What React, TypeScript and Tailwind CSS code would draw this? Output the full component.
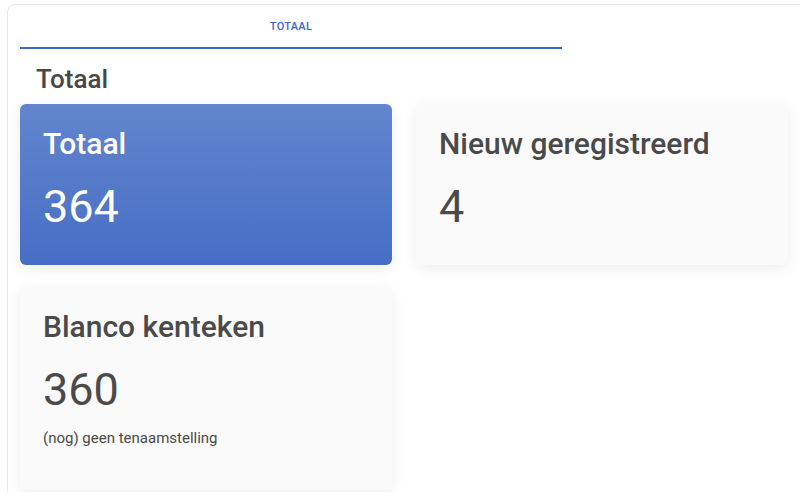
export default function App() {
  const font = { fontFamily: "Roboto, 'Noto Sans', sans-serif" };

  return (
    <div className="w-[800px] h-[492px] overflow-hidden bg-white" style={font}>
      {/* outer panel */}
      <div className="ml-[7px] mt-[4px] w-[830px] h-[520px] rounded-lg border border-[#e6e6e6] bg-white pl-[12px]">
        {/* tabs */}
        <div className="w-[542px] h-[44px] border-b-2 border-[#3f68c9] flex items-center justify-center">
          <span className="text-[11px] font-medium tracking-[0.3px] text-[#3c64c8] pt-[2px]">TOTAAL</span>
        </div>

        <h2 className="pl-[16px] pt-[15px] h-[55px] text-[26px] leading-[30px] font-medium text-[#474747]">Totaal</h2>

        <div className="grid grid-cols-[372px_372px] gap-x-[24px] gap-y-[22px]">
          <StatCard title="Totaal" value="364" primary />
          <StatCard title="Nieuw geregistreerd" value="4" />
          <StatCard title="Blanco kenteken" value="360" note="(nog) geen tenaamstelling" tall />
        </div>
      </div>
    </div>
  );
}

function StatCard({
  title,
  value,
  note,
  primary,
  tall,
}: {
  title: string;
  value: string;
  note?: string;
  primary?: boolean;
  tall?: boolean;
}) {
  return (
    <div
      className={
        (primary
          ? "bg-gradient-to-b from-[#6385cd] to-[#466ec5] text-white "
          : "bg-[#fafafa] text-[#4a4a4a] ") +
        (tall ? "h-[203px] " : "h-[161px] ") +
        "rounded-[6px] px-[23px] pt-[22px] shadow-[0_3px_14px_rgba(0,0,0,0.08)]"
      }
    >
      <div className="text-[30px] leading-[36px] font-medium">{title}</div>
      <div className="mt-[19px] text-[45px] leading-[52px]">{value}</div>
      {note && <div className="mt-[12px] text-[15px] leading-[20px]">{note}</div>}
    </div>
  );
}
